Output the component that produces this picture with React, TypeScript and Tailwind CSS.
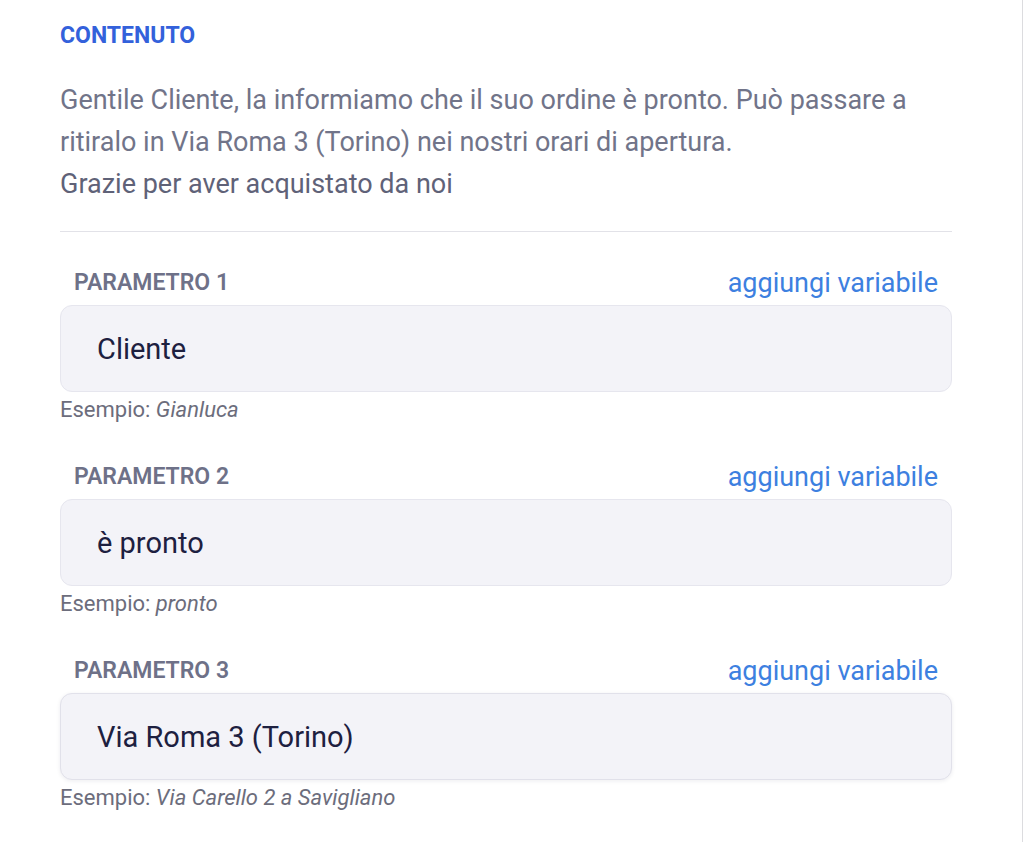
import React from 'react';

const params = [
  { label: 'PARAMETRO 1', value: 'Cliente', example: 'Gianluca' },
  { label: 'PARAMETRO 2', value: 'è pronto', example: 'pronto' },
  { label: 'PARAMETRO 3', value: 'Via Roma 3 (Torino)', example: 'Via Carello 2 a Savigliano', focused: true },
];

function ParamField({ label, value, example, focused }: { label: string; value: string; example: string; focused?: boolean }) {
  return (
    <div className="flex flex-col">
      <div className="flex h-[40px] items-center justify-between px-[14px] pt-[3px]">
        <span className="text-[23px] font-semibold text-[#6e7188]">{label}</span>
        <button className="text-[27px] text-[#3d80e0]">aggiungi variabile</button>
      </div>
      <div
        className={
          focused
            ? 'mt-[3px] flex h-[87px] items-center rounded-[12px] border border-[#e1e1ea] bg-[#f3f3f8] px-[36px] pt-[3px] shadow-[0_1px_4px_rgba(30,30,60,0.08)]'
            : 'mt-[3px] flex h-[87px] items-center rounded-[12px] border border-[#e6e6ee] bg-[#f3f3f8] px-[36px] pt-[3px]'
        }
      >
        <span className="text-[29px] text-[#1d2040]">{value}</span>
      </div>
      <p className="mt-[5px] text-[22px] leading-[26px] text-[#6c6d7c]">
        Esempio: <em>{example}</em>
      </p>
    </div>
  );
}

export default function App() {
  return (
    <div className="flex h-[842px] w-[1024px] bg-white" style={{ fontFamily: 'Roboto, "Noto Sans", sans-serif' }}>
      <div className="w-[1022px] pl-[60px] pr-[70px] pt-[21px]">
        <h2 className="text-[23px] font-bold leading-[30px] text-[#3361db]">CONTENUTO</h2>
        <div className="mt-[28px] text-[27px] leading-[42px] text-[#717489]">
          <p>
            Gentile Cliente, la informiamo che il suo ordine è pronto. Può passare a ritiralo in Via Roma 3 (Torino) nei
            nostri orari di apertura.
          </p>
          <p className="text-[#5f6278]">Grazie per aver acquistato da noi</p>
        </div>
        <div className="mt-[26px] h-px bg-[#e2e2e8]" />
        <div className="mt-[30px] flex flex-col gap-[33px]">
          {params.map((p) => (
            <ParamField key={p.label} {...p} />
          ))}
        </div>
      </div>
      <div className="w-px bg-[#dcdcdf]" />
      <div className="w-px bg-white" />
    </div>
  );
}
